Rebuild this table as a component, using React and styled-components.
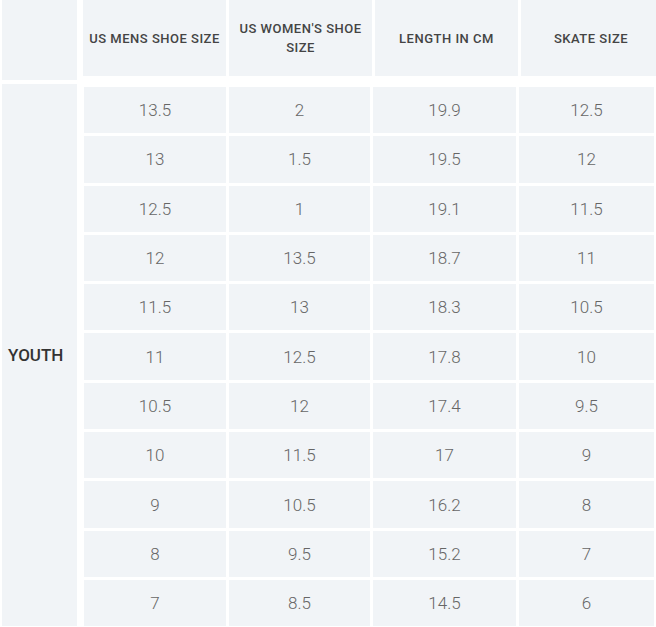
import React from 'react';
import styled, { createGlobalStyle } from 'styled-components';

const GlobalStyle = createGlobalStyle`
  body {
    margin: 0;
    background: #fff;
    font-family: Roboto, "Liberation Sans", sans-serif;
    overflow: hidden;
  }
`;

const CELL_BG = '#f1f4f7';

const Chart = styled.div`
  display: flex;
  gap: 6px;
  padding-left: 2px;
  width: 654px;
  overflow: hidden;
`;

const LabelColumn = styled.div`
  display: flex;
  flex-direction: column;
  gap: 4px;
  width: 75px;
  flex-shrink: 0;
`;

const BlankCell = styled.div`
  height: 80px;
  background: ${CELL_BG};
`;

const GroupLabel = styled.div`
  flex: 1;
  display: flex;
  align-items: center;
  padding-left: 6px;
  background: ${CELL_BG};
  color: #333;
  font-size: 17px;
  font-weight: 500;
`;

const TableSide = styled.div`
  display: flex;
  flex-direction: column;
  gap: 11px;
  flex-shrink: 0;
`;

const HeaderRow = styled.div`
  display: grid;
  grid-template-columns: 143px 143px 143px 140px;
  column-gap: 3px;
  height: 76px;
`;

const HeadCell = styled.div`
  display: flex;
  align-items: center;
  justify-content: center;
  text-align: center;
  padding: 0 6px;
  background: ${CELL_BG};
  color: #444;
  font-size: 13px;
  font-weight: 500;
  letter-spacing: 0.5px;
  line-height: 19px;
  text-transform: uppercase;
`;

const Body = styled.div`
  display: grid;
  grid-template-columns: 142px 141px 143px 135px;
  grid-auto-rows: 46.3px;
  gap: 3px;
  padding-left: 1px;
`;

const Cell = styled.div`
  display: flex;
  align-items: center;
  justify-content: center;
  background: ${CELL_BG};
  color: #666;
  font-size: 17px;
  font-weight: 300;
`;

const headers = ['US Mens Shoe Size', "US Women's Shoe Size", 'Length in cm', 'Skate Size'];

const rows = [
  ['13.5', '2', '19.9', '12.5'],
  ['13', '1.5', '19.5', '12'],
  ['12.5', '1', '19.1', '11.5'],
  ['12', '13.5', '18.7', '11'],
  ['11.5', '13', '18.3', '10.5'],
  ['11', '12.5', '17.8', '10'],
  ['10.5', '12', '17.4', '9.5'],
  ['10', '11.5', '17', '9'],
  ['9', '10.5', '16.2', '8'],
  ['8', '9.5', '15.2', '7'],
  ['7', '8.5', '14.5', '6'],
];

const App = () => (
  <>
    <GlobalStyle />
    <Chart>
      <LabelColumn>
        <BlankCell />
        <GroupLabel>YOUTH</GroupLabel>
      </LabelColumn>
      <TableSide>
        <HeaderRow>
          {headers.map(h => (
            <HeadCell key={h}>{h}</HeadCell>
          ))}
        </HeaderRow>
        <Body>
          {rows.map((row, i) =>
            row.map((value, j) => <Cell key={`${i}-${j}`}>{value}</Cell>)
          )}
        </Body>
      </TableSide>
    </Chart>
  </>
);

export default App;
